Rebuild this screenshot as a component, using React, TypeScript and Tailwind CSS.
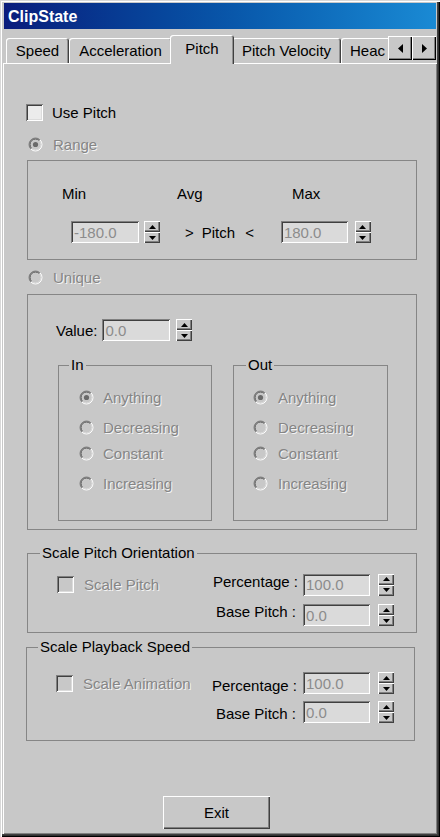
import React from "react";

const raised =
  "shadow-[inset_1px_1px_0_#ffffff,inset_-1px_-1px_0_#404040,inset_-2px_-2px_0_#808080]";
const sunken =
  "shadow-[inset_1px_1px_0_#808080,inset_-1px_-1px_0_#ffffff,inset_2px_2px_0_#404040,inset_-2px_-2px_0_#dcdcdc]";
const dim = "text-[#858585] [text-shadow:1px_1px_0_#f4f4f4]";

function Radio({ checked }: { checked?: boolean }) {
  return (
    <svg width="15" height="15" viewBox="0 0 15 15" className="shrink-0">
      <circle cx="7.5" cy="7.5" r="6.5" fill="#c8c8c8" />
      <path d="M2.9 12.1 A6.5 6.5 0 0 1 12.1 2.9" stroke="#808080" fill="none" />
      <path d="M12.1 2.9 A6.5 6.5 0 0 1 2.9 12.1" stroke="#ffffff" fill="none" />
      <path d="M3.6 11.4 A5.5 5.5 0 0 1 11.4 3.6" stroke="#505050" fill="none" />
      <path d="M11.4 3.6 A5.5 5.5 0 0 1 3.6 11.4" stroke="#dedede" fill="none" />
      {checked && <circle cx="7.5" cy="7.5" r="2.6" fill="#6a6a6a" />}
    </svg>
  );
}

function Check({ disabled }: { disabled?: boolean }) {
  return (
    <div
      className={`w-[17px] h-[17px] shrink-0 ${disabled ? "bg-[#c8c8c8]" : "bg-[#ececec]"} ${sunken}`}
    />
  );
}

function Spinner() {
  return (
    <div className="flex flex-col w-[16px] h-[22px] shrink-0">
      <div className={`flex-1 flex items-center justify-center bg-[#c8c8c8] ${raised}`}>
        <svg width="7" height="4" viewBox="0 0 7 4">
          <path d="M3.5 0 L7 4 L0 4 Z" fill="#000" />
        </svg>
      </div>
      <div className={`flex-1 flex items-center justify-center bg-[#c8c8c8] ${raised}`}>
        <svg width="7" height="4" viewBox="0 0 7 4">
          <path d="M0 0 L7 0 L3.5 4 Z" fill="#000" />
        </svg>
      </div>
    </div>
  );
}

function Field({ value, w }: { value: string; w: string }) {
  return (
    <div
      className={`${w} h-[22px] shrink-0 bg-[#dadada] ${sunken} pl-[3px] flex items-center text-[#8c8c8c]`}
    >
      {value}
    </div>
  );
}

function Group({
  label,
  left,
  className,
  children,
}: {
  label: string;
  left: string;
  className: string;
  children?: React.ReactNode;
}) {
  return (
    <div className={`relative border border-[#868686] ${className}`}>
      <span className={`absolute -top-[10px] ${left} px-[2px] bg-[#c8c8c8] leading-[18px]`}>
        {label}
      </span>
      {children}
    </div>
  );
}

function RadioRow({ label, checked, mt, ml, gap }: { label: string; checked?: boolean; mt: string; ml: string; gap: string }) {
  return (
    <div className={`${mt} ${ml} h-[16px] flex items-center ${gap}`}>
      <Radio checked={checked} />
      <span className={dim}>{label}</span>
    </div>
  );
}

function Direction({ label, left, ml, gap, className }: { label: string; left: string; ml: string; gap: string; className: string }) {
  return (
    <Group label={label} left={left} className={className}>
      <RadioRow label="Anything" checked mt="mt-[23px]" ml={ml} gap={gap} />
      <RadioRow label="Decreasing" mt="mt-[14px]" ml={ml} gap={gap} />
      <RadioRow label="Constant" mt="mt-[10px]" ml={ml} gap={gap} />
      <RadioRow label="Increasing" mt="mt-[14px]" ml={ml} gap={gap} />
    </Group>
  );
}

function Tab({ w, selected, children }: { w: string; selected?: boolean; children: React.ReactNode }) {
  return (
    <div
      className={`${w} shrink-0 flex items-center justify-center bg-[#c8c8c8] rounded-t-[3px] shadow-[inset_1px_1px_0_#ffffff,inset_-1px_0_0_#404040,inset_-2px_0_0_#909090] ${
        selected ? "h-[29px] -mx-[2px] -mb-px relative z-10 pb-[2px]" : "h-[25px]"
      }`}
    >
      {children}
    </div>
  );
}

function ArrowButton({ dir }: { dir: "left" | "right" }) {
  return (
    <div
      className={`w-[24px] h-[24px] mb-[3px] shrink-0 flex items-center justify-center bg-[#c8c8c8] shadow-[inset_1px_1px_0_#ffffff,inset_-1px_-1px_0_#000000,inset_-2px_-2px_0_#808080]`}
    >
      <svg width="5" height="9" viewBox="0 0 5 9">
        {dir === "left" ? <path d="M5 0 L5 9 L0 4.5 Z" fill="#000" /> : <path d="M0 0 L5 4.5 L0 9 Z" fill="#000" />}
      </svg>
    </div>
  );
}

export default function App() {
  return (
    <div className="w-[440px] h-[837px] bg-[#c8c8c8] flex flex-col font-['Liberation_Sans',Arial,sans-serif] text-[15px] leading-[17px] text-black shadow-[inset_1px_1px_0_#d8d8d8,inset_2px_2px_0_#ffffff,inset_-1px_-1px_0_#000000,inset_-2px_-2px_0_#303030,inset_-3px_-3px_0_#404040]">
      <div className="mx-[4px] mt-[3px] h-[26px] bg-linear-to-r from-[#0a1c7c] to-[#1a8ad4] flex items-center pl-[4px]">
        <span className="text-white font-bold text-[16px]">ClipState</span>
      </div>

      <div className="flex items-end h-[34px] pl-[6px]">
        <Tab w="w-[63px]">Speed</Tab>
        <Tab w="w-[103px]">Acceleration</Tab>
        <Tab w="w-[64px]" selected>
          Pitch
        </Tab>
        <Tab w="w-[109px]">Pitch Velocity</Tab>
        <div className="w-[47px] h-[25px] shrink-0 flex items-center pl-[9px] bg-[#c8c8c8] rounded-tl-[3px] shadow-[inset_1px_1px_0_#ffffff]">
          <span className="whitespace-nowrap">Heac</span>
        </div>
        <ArrowButton dir="left" />
        <ArrowButton dir="right" />
      </div>

      <div className="mx-[3px] mb-[3px] flex-1 flex flex-col shadow-[inset_1px_1px_0_#ffffff,inset_-1px_-1px_0_#808080]">
        <div className="mt-[40px] ml-[23px] h-[19px] flex items-center gap-[9px]">
          <Check />
          <span>Use Pitch</span>
        </div>

        <RadioRow label="Range" checked mt="mt-[14px]" ml="ml-[25px]" gap="gap-[10px]" />

        <div className="mt-[8px] ml-[24px] w-[390px] h-[100px] border border-[#868686] flex flex-col">
          <div className="mt-[24px] ml-[34px] h-[17px] flex">
            <span className="w-[115px]">Min</span>
            <span className="w-[115px]">Avg</span>
            <span>Max</span>
          </div>
          <div className="mt-[19px] ml-[43px] h-[22px] flex items-center">
            <Field value="-180.0" w="w-[68px]" />
            <div className="ml-[5px]">
              <Spinner />
            </div>
            <span className="ml-[25px]">&gt;</span>
            <span className="ml-[8px]">Pitch</span>
            <span className="ml-[10px]">&lt;</span>
            <div className="ml-[27px]">
              <Field value="180.0" w="w-[67px]" />
            </div>
            <div className="ml-[7px]">
              <Spinner />
            </div>
          </div>
        </div>

        <RadioRow label="Unique" mt="mt-[9px]" ml="ml-[25px]" gap="gap-[10px]" />

        <div className="mt-[9px] ml-[24px] w-[390px] h-[236px] border border-[#868686] flex flex-col">
          <div className="mt-[24px] ml-[28px] h-[22px] flex items-center">
            <span>Value:</span>
            <div className="ml-[5px]">
              <Field value="0.0" w="w-[68px]" />
            </div>
            <div className="ml-[6px]">
              <Spinner />
            </div>
          </div>
          <div className="mt-[24px] flex">
            <Direction label="In" left="left-[10px]" ml="ml-[20px]" gap="gap-[9px]" className="ml-[30px] w-[154px] h-[156px]" />
            <Direction label="Out" left="left-[12px]" ml="ml-[19px]" gap="gap-[10px]" className="ml-[21px] w-[155px] h-[156px]" />
          </div>
        </div>

        <Group label="Scale Pitch Orientation" left="left-[12px]" className="mt-[23px] ml-[24px] w-[390px] h-[80px] flex flex-col">
          <div className="mt-[19px] ml-[29px] h-[23px] flex items-center">
            <div className="w-[148px] flex items-center gap-[10px]">
              <Check disabled />
              <span className={dim}>Scale Pitch</span>
            </div>
            <span className="w-[93px] text-right mb-[7px]">Percentage :</span>
            <div className="ml-[5px]">
              <Field value="100.0" w="w-[67px]" />
            </div>
            <div className="ml-[8px]">
              <Spinner />
            </div>
          </div>
          <div className="mt-[8px] ml-[29px] h-[22px] flex items-center">
            <div className="w-[148px]" />
            <span className="w-[93px] text-right pr-[2px] mb-[7px]">Base Pitch :</span>
            <div className="ml-[5px]">
              <Field value="0.0" w="w-[67px]" />
            </div>
            <div className="ml-[8px]">
              <Spinner />
            </div>
          </div>
        </Group>

        <Group label="Scale Playback Speed" left="left-[11px]" className="mt-[14px] ml-[23px] w-[389px] h-[94px] flex flex-col">
          <div className="mt-[24px] ml-[29px] h-[22px] flex items-center">
            <div className="w-[148px] flex items-center gap-[10px]">
              <Check disabled />
              <span className={`${dim} whitespace-nowrap`}>Scale Animation</span>
            </div>
            <span className="w-[93px] text-right mt-[4px]">Percentage :</span>
            <div className="ml-[6px]">
              <Field value="100.0" w="w-[67px]" />
            </div>
            <div className="ml-[8px]">
              <Spinner />
            </div>
          </div>
          <div className="mt-[7px] ml-[29px] h-[22px] flex items-center">
            <div className="w-[148px]" />
            <span className="w-[93px] text-right pr-[1px] mt-[2px]">Base Pitch :</span>
            <div className="ml-[6px]">
              <Field value="0.0" w="w-[67px]" />
            </div>
            <div className="ml-[8px]">
              <Spinner />
            </div>
          </div>
        </Group>

        <div
          className={`mt-[55px] ml-[160px] w-[107px] h-[33px] flex items-center justify-center bg-[#c8c8c8] shadow-[inset_1px_1px_0_#ffffff,inset_-1px_-1px_0_#404040,inset_-2px_-2px_0_#808080]`}
        >
          Exit
        </div>
      </div>
    </div>
  );
}
